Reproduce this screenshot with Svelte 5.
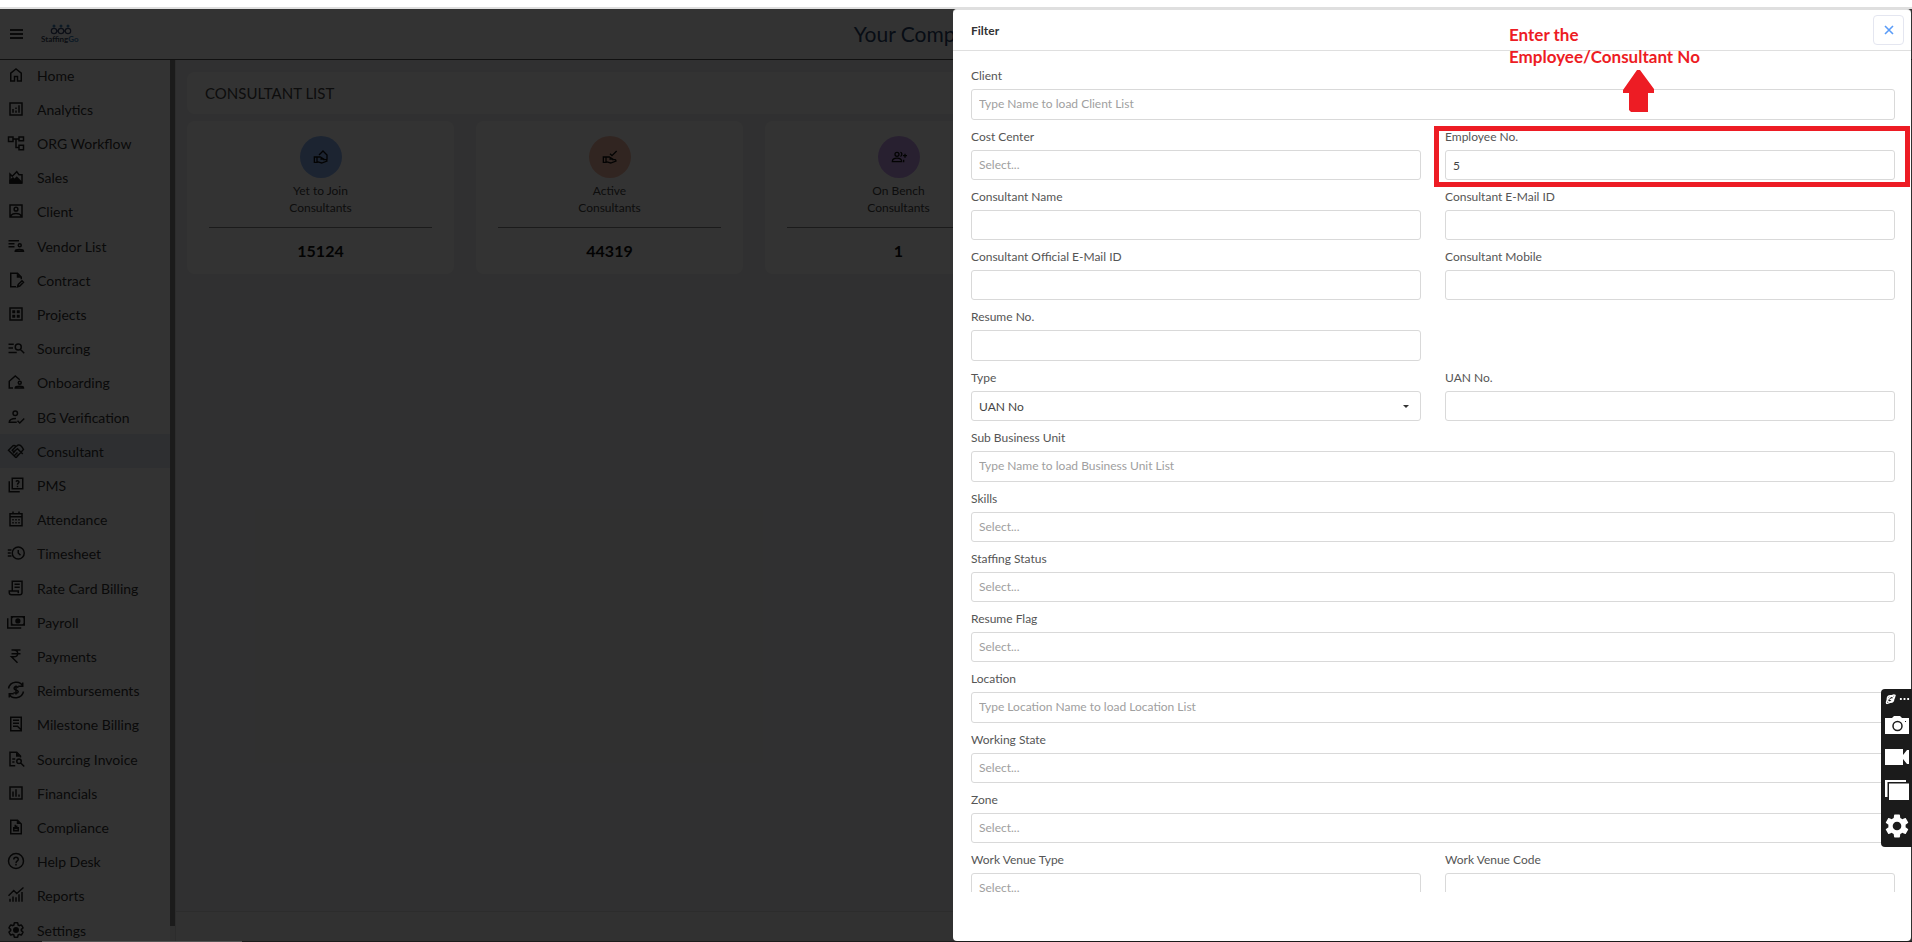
<script>
  const gear = "M19.14 12.94c.04-.3.06-.61.06-.94 0-.32-.02-.64-.07-.94l2.03-1.58c.18-.14.23-.41.12-.61l-1.92-3.32c-.12-.22-.37-.29-.59-.22l-2.39.96c-.5-.38-1.03-.7-1.62-.94l-.36-2.54c-.04-.24-.24-.41-.48-.41h-3.84c-.24 0-.43.17-.47.41l-.36 2.54c-.59.24-1.13.57-1.62.94l-2.39-.96c-.22-.08-.47 0-.59.22L2.74 8.87c-.12.21-.08.47.12.61l2.03 1.58c-.05.3-.09.63-.09.94s.02.64.07.94l-2.03 1.58c-.18.14-.23.41-.12.61l1.92 3.32c.12.22.37.29.59.22l2.39-.96c.5.38 1.03.7 1.62.94l.36 2.54c.05.24.24.41.48.41h3.84c.24 0 .44-.17.47-.41l.36-2.54c.59-.24 1.13-.56 1.62-.94l2.39.96c.22.08.47 0 .59-.22l1.92-3.32c.12-.22.07-.47-.12-.61l-2.01-1.58z";

  // line = stroked path, solid = filled path
  const menu = [
    { label: "Home", line: "M5 20V9.5L12 4l7 5.5V20h-5v-6h-4v6z" },
    { label: "Analytics", line: "M4 4h16v16H4zM8 17v-5M12 17v-3M12 12v-2M16 17V7" },
    { label: "ORG Workflow", line: "M2 4h6v6H2zM16 4h6v5h-6zM16 15h6v6h-6zM8 6.5h8M12 6.5V18h4" },
    { label: "Sales", line: "M4 20V8l3 3 6-6 3 4h4v11z", solid: "M3 21v-5l5-4 2 2 3-3 7 7v3z" },
    { label: "Client", line: "M4 4h16v16H4zM12 7a2.5 2.5 0 100 5 2.5 2.5 0 000-5M5 19c2-5 12-5 14 0" },
    { label: "Vendor List", line: "M2 5h14M2 9h8M2 13h8M17 9a2 2 0 100 4 2 2 0 000-4M11 19c0-3 11-3 11 0z" },
    { label: "Contract", line: "M12 21H5V3h9l5 5v3M14 21l1-3 5-5 2 2-5 5z", solid: "M13 3v6h6z" },
    { label: "Projects", line: "M4 4h16v16H4z", solid: "M7 7h4v4H7zM13 7h4v4h-4zM7 13h4v4H7zM13 13h4v4h-4z" },
    { label: "Sourcing", line: "M2 7h7M2 12h6M2 18h11M15 6.500a4 4 0 100 8 4 4 0 000-8M18 14l5 5" },
    { label: "Onboarding", line: "M8 20H3v-9l8-7 6 5M17 11a2 2 0 100 4 2 2 0 000-4M11 20c0-3 11-3 11 0z" },
    { label: "BG Verification", line: "M11 4a3 3 0 100 6 3 3 0 000-6M13 19H3c0-4 4-5 9-5M14 17l3 3 6-6" },
    { label: "Consultant", active: true, line: "M12 21L2 11l6-6c2-1 3 0 4 1l3-2c3-1 5 2 7 6L12 21M12 6l-5 5 2 2 5-4 7 7M8 15l3-3M10 18l4-4M13 19l3-3" },
    { label: "PMS", line: "M7 3h14v14H7zM3 7v14h14M12 7.500c1-2 4-1 4 .5s-2 1.500-2 3.500M14 13v2" },
    { label: "Attendance", line: "M4 5h16v16H4zM4 9h16M8 2v3M16 2v3", solid: "M7 12h2v2H7zM11 12h2v2h-2zM15 12h2v2h-2zM7 16h2v2H7zM11 16h2v2h-2zM15 16h2v2h-2z" },
    { label: "Timesheet", line: "M15 4a8 8 0 100 16 8 8 0 000-16M15 8v4l3 3M1 8h5M1 12h4M1 16h5" },
    { label: "Rate Card Billing", line: "M7 16V3h13v15c0 2-1 3-3 3H6c-2 0-3-1-3-3v-2h12v3M10 7h7M10 11h7" },
    { label: "Payroll", line: "M6 5h17v11H6zM1 7v13h18", solid: "M14.500 7a3.500 3.500 0 100 7 3.500 3.500 0 000-7M6 5h3L6 8zM23 5h-3l3 3zM6 16v-3l3 3zM23 16v-3l-3 3z" },
    { label: "Payments", line: "M6 4h12M6 9h12M7 4h2c7 0 7 9 0 9H6l8 8" },
    { label: "Reimbursements", line: "M2 10C4 0 18-1 21 7M22 14c-2 10-16 11-19 3M21 2v5h-6M3 22v-5h6M15 9c-2-3-7-1-5 2 1 1 4 1 5 3 0 3-5 3-6 1M12 6v12" },
    { label: "Milestone Billing", line: "M5 3h14v18H5zM8 7h8M8 11h8M8 15h6l5 5" },
    { label: "Sourcing Invoice", line: "M11 21H4V3h9l5 5v2M7 12h4M7 16h3M16 12a3 3 0 100 6 3 3 0 000-6M18 17l5 5", solid: "M12 3v6h6z" },
    { label: "Financials", line: "M4 4h16v16H4zM8 17v-7M12 17V7M16 17v-3" },
    { label: "Compliance", line: "M5 3h9l5 5v13H5zM9 12v5h6v-5M11 15V9M13 15v-5", solid: "M13 3v5h6z" },
    { label: "Help Desk", line: "M12 2a10 10 0 100 20 10 10 0 000-20M9 10c0-4 6-4 6 0 0 2-3 2-3 5M12 16v2" },
    { label: "Reports", line: "M2 13l7-7 4 4 9-8M4 21v-4M8 21v-7M12 21v-6M16 21V11M20 21V8" },
    { label: "Settings", line: gear, solid: "M12 8a4 4 0 100 8 4 4 0 000-8" },
  ];

  const cards = [
    { name: "Yet to Join", total: 15124, tone: "blue", line: "M2 12h4v8H2zM6 12h5l5 3h-5M6 19l7 2 8-3c0-3-3-2-6-2M9 9l6-6 6 6v7" },
    { name: "Active", total: 44319, tone: "orange", line: "M2 12h4v8H2zM6 12h5l5 3h-5M6 19l7 2 8-3c0-3-3-2-6-2M12 7l3 3 7-7" },
    { name: "On Bench", total: 1, tone: "purple", line: "M9 5a3 3 0 100 6 3 3 0 000-6M2 19c0-7 14-7 14 0zM14 5c3 0 3 6 0 6M19 20v-4M21 7v6M18 10h6" },
  ];

  const fields = [
    { label: "Client", hint: "Type Name to load Client List", wide: true, lookup: true },
    { label: "Cost Center", hint: "Select..." },
    { label: "Employee No.", value: "5", marked: true },
    { label: "Consultant Name" },
    { label: "Consultant E-Mail ID" },
    { label: "Consultant Official E-Mail ID" },
    { label: "Consultant Mobile" },
    { label: "Resume No.", alone: true },
    { label: "Type", options: ["UAN No"] },
    { label: "UAN No." },
    { label: "Sub Business Unit", hint: "Type Name to load Business Unit List", wide: true, lookup: true },
    { label: "Skills", hint: "Select...", wide: true },
    { label: "Staffing Status", hint: "Select...", wide: true },
    { label: "Resume Flag", hint: "Select...", wide: true },
    { label: "Location", hint: "Type Location Name to load Location List", wide: true, lookup: true },
    { label: "Working State", hint: "Select...", wide: true },
    { label: "Zone", hint: "Select...", wide: true },
    { label: "Work Venue Type", hint: "Select..." },
    { label: "Work Venue Code" },
  ];

  let open = $state(true);
</script>

<div class="page">
  <div class="strip"></div>
  <div class="app">
    <header class="header">
      <button class="burger" aria-label="Menu"><span></span><span></span><span></span></button>
      <svg class="logo" viewBox="0 0 40 22" aria-label="StaffingGo">
        <g fill="none" stroke="#3c4a70" stroke-width="1.2">
          <circle cx="13" cy="8" r="2.700" /><circle cx="20" cy="8" r="2.700" /><circle cx="27" cy="8" r="2.700" />
          <path d="M15 10l3-4M22 10l3-4" />
        </g>
        <g fill="#3c80b8">
          <circle cx="13" cy="3" r="1.500" /><circle cx="20" cy="3" r="1.500" /><circle cx="27" cy="3" r="1.500" />
        </g>
        <text x="0" y="19" font-size="8" font-weight="700" fill="#3c4a60">Staffing<tspan fill="#3c80b8">Go</tspan></text>
      </svg>
      <div class="company">Your Comp</div>
    </header>

    <div class="content">
      <nav class="sidebar">
        <ul>
          {#each menu as item}
            <li>
              <a href="#top" class:active={item.active}>
                <svg class="icon" viewBox="0 0 24 24">
                  <path d={item.line} fill="none" stroke="currentColor" stroke-width="2" />
                  {#if item.solid}<path d={item.solid} fill="currentColor" />{/if}
                </svg>
                {item.label}
              </a>
            </li>
          {/each}
        </ul>
        <div class="scroll"><div class="thumb"></div></div>
      </nav>

      <main class="main">
        <h1>CONSULTANT LIST</h1>
        <div class="cards">
          {#each cards as card}
            <section class="card">
              <div class="circle {card.tone}">
                <svg viewBox="0 0 24 24"><path d={card.line} fill="none" stroke="#111" stroke-width="2" /></svg>
              </div>
              <div class="cardName">{card.name}<br />Consultants</div>
              <hr />
              <div class="total">{card.total}</div>
            </section>
          {/each}
        </div>
        <footer></footer>
      </main>
    </div>

    {#if open}
      <div class="overlay"></div>
      <aside class="drawer">
        <div class="drawerHead">
          <h2>Filter</h2>
          <button class="close" aria-label="Close" onclick={() => (open = false)}>
            <svg viewBox="0 0 10 10"><path d="M1 1l8 8M9 1L1 9" stroke="#5a9cf8" stroke-width="1.600" /></svg>
          </button>
        </div>

        <form class="fields">
          {#each fields as field, i}
            <div class="field" class:wide={field.wide} class:alone={field.alone} class:lookup={field.lookup}>
              <label for="f{i}">{field.label}</label>
              {#if field.options}
                <div class="selectBox">
                  <select id="f{i}">
                    {#each field.options as option}<option>{option}</option>{/each}
                  </select>
                </div>
              {:else}
                <input id="f{i}" type="text" placeholder={field.hint} value={field.value ?? ""} />
              {/if}
              {#if field.marked}<div class="mark"></div>{/if}
            </div>
          {/each}
        </form>
        <div class="drawerFoot"></div>

        <div class="note">
          Enter the<br />Employee/Consultant No
          <svg viewBox="0 0 32 44"><path d="M14 1h3l14 19v4h-6v19H8l-2-2V24H0v-3z" fill="#ed1c24" /></svg>
        </div>
      </aside>
    {/if}
  </div>
  <div class="bottomLine"><div></div></div>

  <div class="recorder">
    <div class="recorderTop">
      <svg viewBox="0 0 12 12"><g fill="none" stroke="#fff" stroke-width="1.500"><circle cx="6" cy="6" r="3.500" /><path d="M2 11c-2-3 6-11 9-9 0 3-5 9-9 9M5 6l2 1 1-2" /></g></svg>
      <svg viewBox="0 0 12 12"><path d="M1 5h2v2H1zM5 5h2v2H5zM9 5h2v2H9z" fill="#fff" /></svg>
    </div>
    <button aria-label="Take screenshot">
      <svg viewBox="0 0 24 18"><path d="M0 2h7l2-2h6l2 2h7v16H0z" fill="#fff" /><circle cx="12.500" cy="10" r="4.500" fill="none" stroke="#1b1b1b" stroke-width="1.500" /><path d="M20 5h1v1h-1z" fill="#1b1b1b" /></svg>
    </button>
    <button aria-label="Record video">
      <svg viewBox="0 0 24 18"><path d="M0 1h18v6l4-5h2v14h-2l-4-5v6H0z" fill="#fff" /></svg>
    </button>
    <button aria-label="Gallery">
      <svg class="gallery" viewBox="0 0 24 20"><path d="M0 0h21v2H2.500v15H0z" fill="#fff" /><path d="M4 3.500h20V20H4z" fill="#fff" /></svg>
    </button>
    <button aria-label="Recorder settings">
      <svg class="gear" viewBox="2 2 20 20"><path d={gear} fill="#fff" /><circle cx="12" cy="12" r="3.600" fill="#1b1b1b" /></svg>
    </button>
  </div>
</div>

<style>
  :global(body) {
    margin: 0;
  }
  .page {
    height: 100vh;
    display: flex;
    flex-direction: column;
    overflow: hidden;
    background: #fff;
    color: #444;
    font-family: Lato, sans-serif;
    font-size: 12px;
  }
  .page :global(*) {
    box-sizing: border-box;
  }
  .strip {
    height: 9px;
    flex: none;
    border-bottom: 2px solid #dfdfdf;
  }
  .app {
    position: relative;
    flex: 1;
    min-height: 0;
    display: flex;
    flex-direction: column;
  }
  button {
    padding: 0;
    border: 0;
    background: none;
    font: inherit;
    cursor: pointer;
  }

  .header {
    height: 51px;
    flex: none;
    display: flex;
    align-items: center;
    border-bottom: 1px solid #555;
  }
  .burger {
    width: 13px;
    margin-left: 10px;
    display: grid;
    gap: 2px;
  }
  .burger span {
    height: 2px;
    background: #333;
  }
  .logo {
    width: 40px;
    height: 22px;
    margin-left: 18px;
  }
  .company {
    margin-left: calc(40% + 8px);
    padding-bottom: 2px;
    font-size: 21px;
    color: #284468;
    white-space: nowrap;
  }

  .content {
    flex: 1;
    min-height: 0;
    display: flex;
  }
  .sidebar {
    width: 176px;
    flex: none;
    display: flex;
    overflow: hidden;
    border-right: 1px solid #ddd;
  }
  .sidebar ul {
    flex: 1;
    margin: -2px 0 0;
    padding: 0;
    list-style: none;
  }
  .sidebar li:nth-child(5n) {
    padding-bottom: 1px;
  }
  .sidebar a {
    height: 34px;
    padding-left: 7px;
    display: flex;
    align-items: center;
    gap: 12px;
    color: #333;
    font-size: 14px;
    text-decoration: none;
  }
  .sidebar a.active {
    background: #e4ecf6;
  }
  .icon {
    width: 18px;
    height: 18px;
    color: #222;
  }
  .scroll {
    width: 5px;
    padding-bottom: 15px;
    background: #eee;
  }
  .thumb {
    height: 100%;
    background: #888;
  }

  .main {
    flex: 1;
    display: flex;
    flex-direction: column;
    background: #f0f0f2;
  }
  h1 {
    height: 42px;
    margin: 12px 13px 7px 11px;
    padding-left: 18px;
    border-radius: 8px;
    background: #fff;
    color: #444;
    font-size: 15px;
    font-weight: 400;
    line-height: 42px;
  }
  .cards {
    margin: 0 13px 0 11px;
    display: grid;
    grid-template-columns: repeat(6, 1fr);
    gap: 22px;
  }
  .card {
    padding: 15px 22px 11px;
    border-radius: 8px;
    background: #fff;
    text-align: center;
  }
  .circle {
    width: 42px;
    height: 42px;
    margin: 0 auto 4px;
    display: grid;
    place-items: center;
    border-radius: 50%;
  }
  .circle svg {
    width: 16px;
    height: 16px;
  }
  .blue {
    background: #8cb4f5;
  }
  .orange {
    background: #f5b9a5;
  }
  .purple {
    background: #c8a0f0;
  }
  .cardName {
    color: #444;
    line-height: 17px;
  }
  hr {
    margin: 11px 0;
    border: 0;
    border-top: 1px solid #888;
  }
  .total {
    color: #111;
    font-size: 16px;
    font-weight: 700;
    line-height: 24px;
  }
  footer {
    height: 30px;
    margin-top: auto;
    border-top: 1px solid #ddd;
    background: #f4f4f4;
  }

  .overlay {
    position: absolute;
    inset: 0;
    background: rgba(0, 0, 0, 0.8);
  }
  .drawer {
    position: absolute;
    top: 0;
    right: 1px;
    bottom: 0;
    width: calc(50% + 2px);
    display: flex;
    flex-direction: column;
    overflow: hidden;
    border-radius: 4px;
    border-top: 1px solid #dfdfdf;
    background: #fff;
  }
  .drawerHead {
    height: 41px;
    flex: none;
    padding: 0 7px 0 18px;
    display: flex;
    align-items: center;
    justify-content: space-between;
    border-bottom: 1px solid #dfdfdf;
  }
  h2 {
    margin: 0;
    color: #333;
    font-size: 12px;
    font-weight: 700;
  }
  .close {
    width: 31px;
    height: 30px;
    display: grid;
    place-items: center;
    border: 1px solid #e4e6f0;
    border-radius: 4px;
  }
  .close svg {
    width: 10px;
    height: 10px;
  }
  .fields {
    flex: 1;
    min-height: 0;
    padding: 16px 16px 0 18px;
    display: grid;
    grid-template-columns: 1fr 1fr;
    grid-auto-rows: max-content;
    gap: 8px 24px;
    overflow: hidden;
  }
  .field {
    position: relative;
    display: flex;
    flex-direction: column;
    gap: 4px;
  }
  .wide {
    grid-column: 1 / -1;
  }
  .alone {
    margin-right: calc(50% + 12px);
    grid-column: 1 / -1;
  }
  label {
    color: #555;
    line-height: 18px;
  }
  input,
  select {
    width: 100%;
    height: 30px;
    padding: 0 7px;
    border: 1px solid #d9d9d9;
    border-radius: 3px;
    background: #fff;
    color: #444;
    font: inherit;
    appearance: none;
  }
  .lookup input,
  .alone input {
    height: 31px;
  }
  input:placeholder-shown {
    padding-bottom: 2px;
  }
  input::placeholder {
    color: #a0a0a0;
  }
  .selectBox {
    position: relative;
  }
  .selectBox::after {
    content: "";
    position: absolute;
    top: 14px;
    right: 12px;
    border: 3px solid transparent;
    border-top: 3px solid #333;
  }
  .mark {
    position: absolute;
    inset: -2px -15px -7px -11px;
    border: 5px solid #ed1c24;
    pointer-events: none;
  }
  .drawerFoot {
    height: 49px;
    flex: none;
  }
  .note {
    position: absolute;
    top: 14px;
    left: 556px;
    color: #ed1c24;
    font-size: 17px;
    font-weight: 700;
    line-height: 22px;
    pointer-events: none;
  }
  .note svg {
    width: 32px;
    height: 44px;
    margin: 1px 0 0 114px;
    display: block;
  }

  .bottomLine {
    height: 1px;
    flex: none;
    background: #1c1c1c;
  }
  .bottomLine div {
    width: 200px;
    height: 1px;
    margin-left: 42px;
    background: #555;
  }

  .recorder {
    position: fixed;
    right: 0;
    bottom: 95px;
    width: 31px;
    height: 158px;
    padding: 4px 3px 0 4px;
    display: flex;
    flex-direction: column;
    align-items: center;
    gap: 14px;
    border-radius: 4px 0 0 4px;
    background: #1b1b1b;
  }
  .recorderTop {
    margin-bottom: -3px;
    display: flex;
    gap: 3px;
  }
  .recorderTop svg {
    width: 11px;
    height: 12px;
  }
  .recorder button svg {
    width: 24px;
    height: 18px;
    display: block;
  }
  .recorder button .gallery {
    height: 20px;
  }
  .recorder button .gear {
    height: 24px;
  }
</style>
